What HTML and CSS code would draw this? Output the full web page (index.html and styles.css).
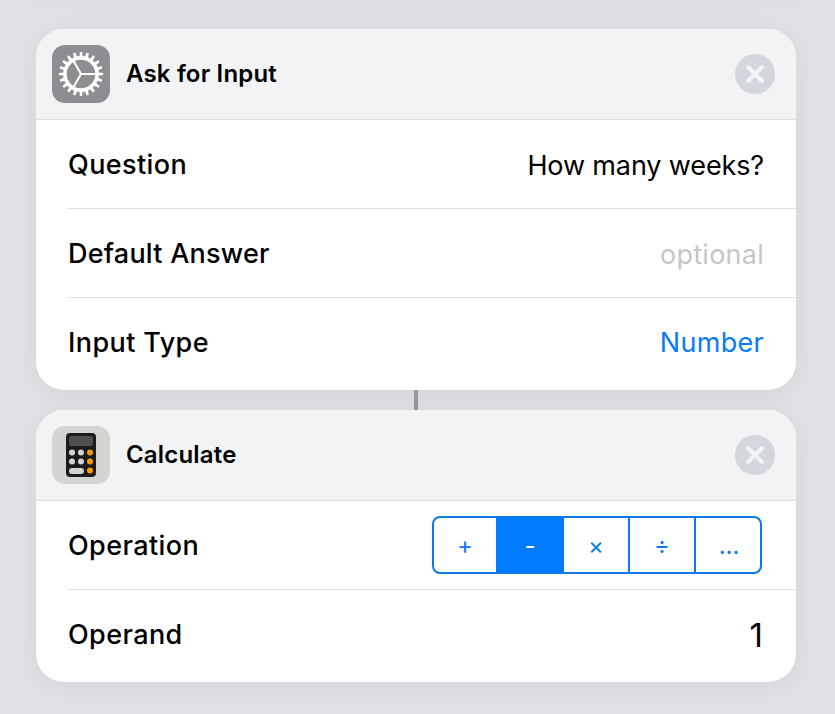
FILE: index.html
```
<!DOCTYPE html>
<html lang="en">
<head>
  <meta charset="UTF-8">
  <meta name="viewport" content="width=device-width, initial-scale=1.0">
  <title>Shortcut Editor</title>
  <link rel="stylesheet" href="styles.css">
</head>
<body>

  <div class="workflow">
    <div class="previous"></div>

    <div class="card">
      <div class="card-header">
        <svg class="app-icon" viewBox="0 0 58 58">
          <rect width="58" height="58" rx="13" fill="#8e8d92"/>
          <g fill="none" stroke="#fff">
            <circle cx="29" cy="29" r="16.1" stroke-width="3.6"/>
            <circle class="teeth-base" cx="29" cy="29" r="18.6" stroke-width="2.6" pathLength="80"/>
            <circle class="teeth-tip" cx="29" cy="29" r="20.8" stroke-width="2.6" pathLength="80"/>
            <path d="M29 29H45M29 29L21 15.1M29 29L21 42.9" stroke-width="2.1"/>
          </g>
        </svg>
        <span class="title">Ask for Input</span>
        <button class="close" aria-label="Remove">
          <svg viewBox="0 0 40 40"><path d="M13.2 13.2L26.8 26.8M26.8 13.2L13.2 26.8"/></svg>
        </button>
      </div>
      <div class="row">
        <span class="label wide">Question</span>
        <span class="value question">How many weeks?</span>
      </div>
      <div class="row">
        <span class="label">Default Answer</span>
        <span class="value placeholder">optional</span>
      </div>
      <div class="row">
        <span class="label wide">Input Type</span>
        <span class="value link">Number</span>
      </div>
    </div>

    <div class="connector"></div>

    <div class="card">
      <div class="card-header">
        <svg class="app-icon" viewBox="0 0 58 58">
          <rect width="58" height="58" rx="13" fill="#d4d4d1"/>
          <rect x="14" y="7" width="30" height="44" rx="4" fill="#1c1c1c"/>
          <rect x="17" y="10" width="24" height="10" rx="2" fill="#505050"/>
          <g fill="#d4d4d2">
            <circle cx="20" cy="26.5" r="3"/>
            <circle cx="29" cy="26.5" r="3"/>
            <circle cx="20" cy="35.5" r="3"/>
            <circle cx="29" cy="35.5" r="3"/>
            <rect x="17" y="42" width="15" height="6" rx="3"/>
          </g>
          <g fill="#ff9809">
            <circle cx="38" cy="26.5" r="3"/>
            <circle cx="38" cy="35.5" r="3"/>
            <circle cx="38" cy="44.5" r="3"/>
          </g>
        </svg>
        <span class="title">Calculate</span>
        <button class="close" aria-label="Remove">
          <svg viewBox="0 0 40 40"><path d="M13.2 13.2L26.8 26.8M26.8 13.2L13.2 26.8"/></svg>
        </button>
      </div>
      <div class="row">
        <span class="label wide">Operation</span>
        <div class="segments">
          <button class="segment">+</button>
          <button class="segment selected">-</button>
          <button class="segment">×</button>
          <button class="segment">÷</button>
          <button class="segment more">...</button>
        </div>
      </div>
      <div class="row">
        <span class="label wide">Operand</span>
        <span class="value number">1</span>
      </div>
    </div>
  </div>

</body>
</html>
```
FILE: styles.css
```
* {
  box-sizing: border-box;
}
body {
  margin: 0;
  height: 714px;
  overflow: hidden;
  background: #e0e1e5;
  color: #000;
  font-family: Inter, "Liberation Sans", sans-serif;
}
button {
  margin: 0;
  padding: 0;
  border: none;
  background: none;
  font-family: inherit;
}
.workflow {
  width: 760px;
  margin-left: 36px;
}
/* bottom edge of the card scrolled off the top */
.previous {
  height: 20px;
  margin-top: -20px;
  margin-bottom: 29px;
  box-shadow: 0 0 24px rgba(0, 0, 0, 0.04);
}
.card {
  background: #fff;
  border-radius: 28px;
  box-shadow: 0 4px 24px rgba(0, 0, 0, 0.06);
  padding-bottom: 3px;
}
.card-header {
  display: flex;
  align-items: center;
  height: 91px;
  padding: 0 21px 0 16px;
  background: #f1f3f5;
  border-bottom: 1px solid #dcdde0;
  border-radius: 28px 28px 0 0;
}
.app-icon {
  width: 58px;
  height: 58px;
  margin-right: 16px;
}
.teeth-base {
  stroke-dasharray: 2 2;
  stroke-dashoffset: 1;
}
.teeth-tip {
  stroke-dasharray: 1.5 2.5;
  stroke-dashoffset: 0.75;
}
.title {
  font-size: 24px;
  font-weight: 600;
  line-height: 30px;
  letter-spacing: 0.18px;
}
.close {
  width: 40px;
  height: 40px;
  margin-left: auto;
  border-radius: 50%;
  background: #d3d6dd;
}
.close svg {
  display: block;
  width: 40px;
  height: 40px;
  fill: none;
  stroke: #f3f4f6;
  stroke-width: 4.2;
  stroke-linecap: round;
}
.row {
  display: flex;
  align-items: center;
  justify-content: space-between;
  height: 89px;
  margin-left: 32px;
  padding-right: 32px;
  border-bottom: 1px solid #e0e0e2;
}
.row:last-child {
  border-bottom: none;
}
.label {
  font-size: 27px;
  font-weight: 500;
  letter-spacing: 0.23px;
}
.wide {
  letter-spacing: 0.4px;
}
.value {
  font-size: 27px;
  padding-top: 2px;
}
.question {
  letter-spacing: -0.13px;
}
.placeholder {
  color: #c5c5ca;
  letter-spacing: 0.25px;
}
.link {
  color: #0a7af5;
  padding-top: 0;
  letter-spacing: 0.3px;
}
.number {
  font-size: 33px;
  padding: 0 1px 0 0;
}
.segments {
  display: flex;
  width: 330px;
  height: 58px;
  margin-right: 2px;
  overflow: hidden;
  border: 2px solid #0a7aec;
  border-radius: 8px;
}
.segment {
  width: 66px;
  border-left: 2px solid #0a7aec;
  color: #0a7aec;
  font-size: 24px;
}
.segment:first-child {
  width: 62px;
  border-left: none;
}
.selected {
  background: #007aff;
  border-color: #007aff;
  color: #fff;
}
.selected + .segment {
  border-color: #007aff;
}
.more {
  padding-left: 2px;
}
.connector {
  width: 4px;
  height: 20px;
  margin: 0 auto;
  background: #97989b;
}
```
